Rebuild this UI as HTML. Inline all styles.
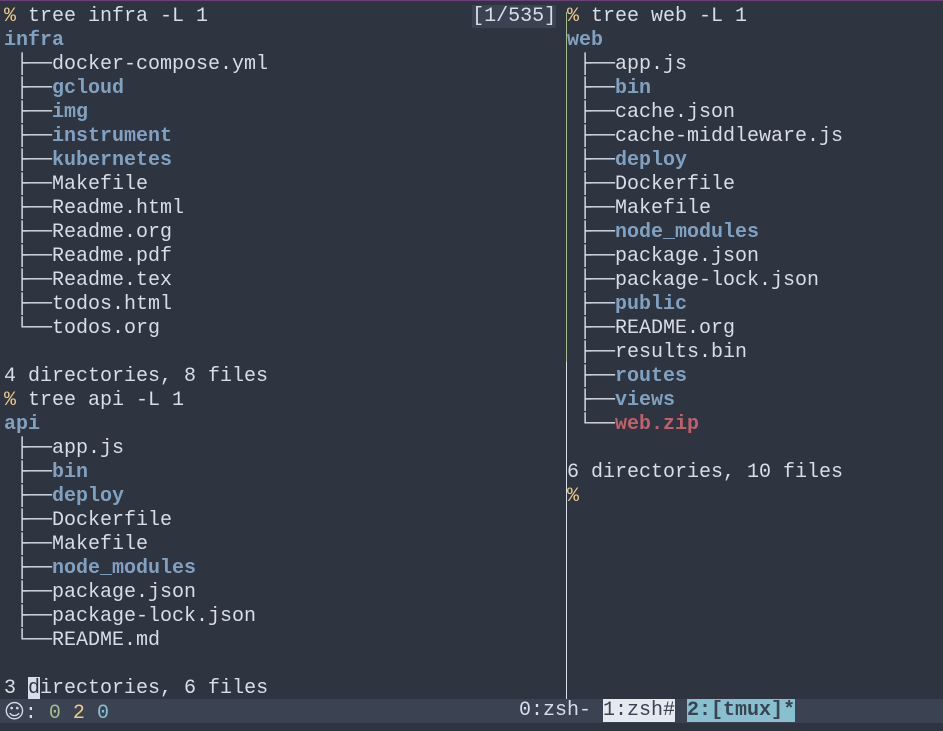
<!DOCTYPE html>
<html><head><meta charset="utf-8"><style>
html,body{margin:0;padding:0;width:943px;height:731px;background:#2e3440;overflow:hidden}
body{position:relative;font-family:"Liberation Mono","DejaVu Sans Mono",monospace;font-size:20px;color:#d8dee9}
.top{position:absolute;left:0;top:0;width:943px;height:1px;background:#6b3f78}
.pane{position:absolute;top:5px;white-space:pre;line-height:24px}
.b{color:#81a1c1;font-weight:bold}
.r{color:#bf616a;font-weight:bold}
.y{color:#ebcb8b}
.g{color:#a3be8c}
.c{color:#88c0d0}
.cur{background:#d8dee9;color:#2e3440}
.sel{background:#3b4252}
.vd{position:absolute;left:566px;width:1px}
.status{position:absolute;left:0;top:699px;width:943px;height:24px;background:#3b4252;white-space:pre;line-height:24px}
</style></head><body>
<div class="top"></div>
<div class="vd" style="top:12px;height:350px;background:#a3be8c"></div>
<div class="vd" style="top:362px;height:337px;background:#d8dee9"></div>
<div class="pane" style="left:4px"><span class="y">%</span> tree infra -L 1                      <span class="sel">[1/535]</span>
<span class="b">infra</span>
 ├──docker-compose.yml
 ├──<span class="b">gcloud</span>
 ├──<span class="b">img</span>
 ├──<span class="b">instrument</span>
 ├──<span class="b">kubernetes</span>
 ├──Makefile
 ├──Readme.html
 ├──Readme.org
 ├──Readme.pdf
 ├──Readme.tex
 ├──todos.html
 └──todos.org

4 directories, 8 files
<span class="y">%</span> tree api -L 1
<span class="b">api</span>
 ├──app.js
 ├──<span class="b">bin</span>
 ├──<span class="b">deploy</span>
 ├──Dockerfile
 ├──Makefile
 ├──<span class="b">node_modules</span>
 ├──package.json
 ├──package-lock.json
 └──README.md

3 <span class="cur">d</span>irectories, 6 files</div>
<div class="pane" style="left:567px"><span class="y">%</span> tree web -L 1
<span class="b">web</span>
 ├──app.js
 ├──<span class="b">bin</span>
 ├──cache.json
 ├──cache-middleware.js
 ├──<span class="b">deploy</span>
 ├──Dockerfile
 ├──Makefile
 ├──<span class="b">node_modules</span>
 ├──package.json
 ├──package-lock.json
 ├──<span class="b">public</span>
 ├──README.org
 ├──results.bin
 ├──<span class="b">routes</span>
 ├──<span class="b">views</span>
 └──<span class="r">web.zip</span>

6 directories, 10 files
<span class="y">%</span></div>
<div class="status"><span style="position:absolute;left:4px"><span style="font-family:'DejaVu Sans',sans-serif">☺</span>: <span class="g">0</span> <span class="y">2</span> <span class="c">0</span></span><span style="position:absolute;left:519px">0:zsh- <span style="background:#e5e9f0;color:#3b4252">1:zsh#</span> <span style="background:#88c0d0;color:#3b4252;font-weight:bold">2:[tmux]*</span></span></div>
</body></html>
